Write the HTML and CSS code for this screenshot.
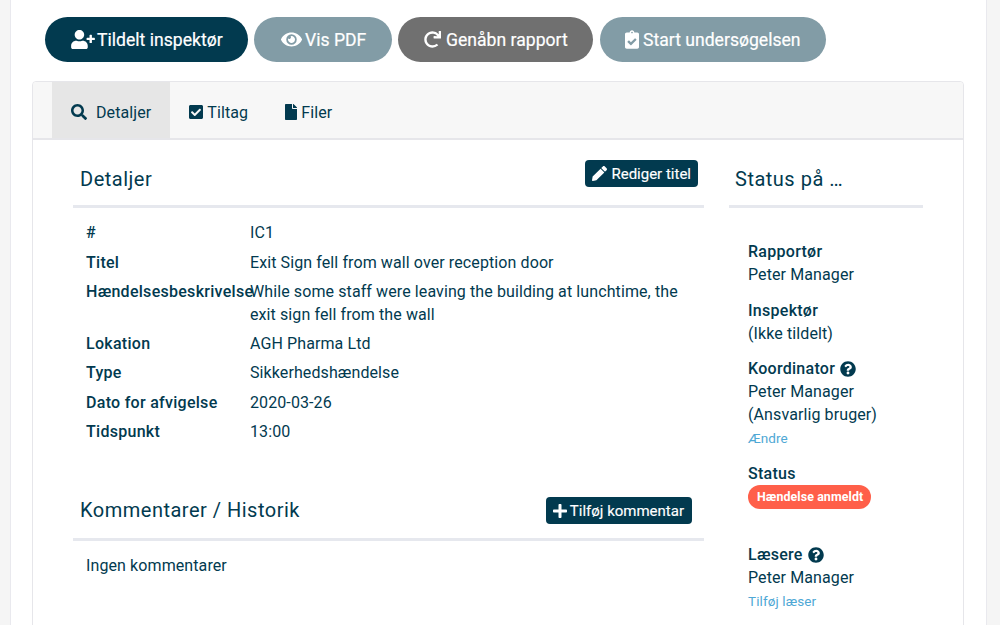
FILE: index.html
```html
<!DOCTYPE html>
<html lang="da">
<head>
<meta charset="utf-8">
<title>Detaljer</title>
<link rel="stylesheet" href="styles.css">
</head>
<body>
<main class="panel">
  <div class="actions">
    <button class="pill pill-dark"><svg class="ic-user" viewBox="0 0 640 512"><path d="M624 208h-64v-64c0-8.800-7.200-16-16-16h-32c-8.800 0-16 7.200-16 16v64h-64c-8.800 0-16 7.200-16 16v32c0 8.800 7.200 16 16 16h64v64c0 8.800 7.200 16 16 16h32c8.800 0 16-7.200 16-16v-64h64c8.800 0 16-7.200 16-16v-32c0-8.800-7.200-16-16-16zm-400 48c70.700 0 128-57.300 128-128S294.700 0 224 0 96 57.300 96 128s57.300 128 128 128zm89.600 32h-16.700c-22.200 10.200-46.900 16-72.900 16s-50.600-5.800-72.900-16h-16.700C60.200 288 0 348.200 0 422.400V464c0 26.500 21.500 48 48 48h352c26.500 0 48-21.500 48-48v-41.600c0-74.200-60.200-134.400-134.400-134.400z"/></svg>Tildelt inspektør</button>
    <button class="pill pill-muted pill-pdf"><svg class="ic-eye" viewBox="0 0 576 512"><path d="M572.520 241.400C518.290 135.590 410.930 64 288 64S57.680 135.640 3.480 241.410a32.350 32.350 0 0 0 0 29.190C57.710 376.410 165.070 448 288 448s230.320-71.640 284.520-177.410a32.350 32.350 0 0 0 0-29.190zM288 400a144 144 0 1 1 144-144 143.930 143.930 0 0 1-144 144zm0-240a95.310 95.310 0 0 0-25.310 3.790 47.850 47.850 0 0 1-66.900 66.900A95.780 95.780 0 1 0 288 160z"/></svg>Vis PDF</button>
    <button class="pill pill-grey"><svg class="ic-redo" viewBox="0 0 512 512"><path d="M500.330 0h-47.410a12 12 0 0 0-12 12.570l4 82.760A247.420 247.420 0 0 0 256 8C119.340 8 7.900 119.530 8 256.190 8.100 393.070 119.100 504 256 504a247.100 247.100 0 0 0 166.180-63.910 12 12 0 0 0 .480-17.430l-34-34a12 12 0 0 0-16.380-.550A176 176 0 1 1 402.100 157.800l-101.530-4.870a12 12 0 0 0-12.570 12v47.410a12 12 0 0 0 12 12h200.330a12 12 0 0 0 12-12V12a12 12 0 0 0-12-12z"/></svg>Genåbn rapport</button>
    <button class="pill pill-muted pill-start"><svg class="ic-clip" viewBox="0 0 384 512"><path d="M336 64h-80c0-35.300-28.700-64-64-64s-64 28.700-64 64H48C21.500 64 0 85.500 0 112v352c0 26.500 21.500 48 48 48h288c26.500 0 48-21.500 48-48V112c0-26.500-21.500-48-48-48zM192 40c13.300 0 24 10.700 24 24s-10.700 24-24 24-24-10.700-24-24 10.700-24 24-24zm121.200 231.800l-143 141.800c-4.700 4.700-12.300 4.600-17-.1l-82.600-83.300c-4.700-4.700-4.600-12.300.1-17L99.100 285c4.700-4.700 12.300-4.600 17 .1l46 46.400 106-105.200c4.700-4.700 12.300-4.600 17 .1l28.200 28.400c4.700 4.800 4.600 12.300-.1 17z"/></svg>Start undersøgelsen</button>
  </div>

  <section class="card">
    <nav class="tabs">
      <a class="tab tab-active"><svg class="ic-search" viewBox="0 0 512 512"><path d="M505 442.700L405.300 343c-4.500-4.500-10.600-7-17-7H372c27.600-35.300 44-79.700 44-128C416 93.100 322.900 0 208 0S0 93.100 0 208s93.100 208 208 208c48.300 0 92.700-16.400 128-44v16.300c0 6.400 2.500 12.500 7 17l99.700 99.700c9.400 9.400 24.600 9.400 33.900 0l28.300-28.300c9.400-9.400 9.400-24.600.1-34zM208 336c-70.700 0-128-57.200-128-128 0-70.700 57.200-128 128-128 70.700 0 128 57.200 128 128 0 70.700-57.200 128-128 128z"/></svg>Detaljer</a>
      <a class="tab"><svg class="ic-tab" viewBox="0 0 448 512"><path d="M400 480H48c-26.510 0-48-21.490-48-48V80c0-26.510 21.490-48 48-48h352c26.510 0 48 21.490 48 48v352c0 26.510-21.490 48-48 48zm-204.686-98.059l184-184c6.248-6.248 6.248-16.379 0-22.627l-22.627-22.627c-6.248-6.248-16.379-6.249-22.628 0L184 302.745l-70.059-70.059c-6.248-6.248-16.379-6.248-22.628 0l-22.627 22.627c-6.248 6.248-6.248 16.379 0 22.627l104 104c6.249 6.250 16.379 6.250 22.628.001z"/></svg>Tiltag</a>
      <a class="tab"><svg class="ic-file" viewBox="0 0 384 512"><path d="M224 136V0H24C10.700 0 0 10.700 0 24v464c0 13.300 10.700 24 24 24h336c13.300 0 24-10.700 24-24V160H248c-13.200 0-24-10.800-24-24zm160-14.100v6.100H256V0h6.100c6.400 0 12.500 2.500 17 7l97.900 98c4.500 4.500 7 10.600 7 16.900z"/></svg>Filer</a>
    </nav>

    <div class="card-body">
      <div class="main-col">
        <header class="sec-head">
          <h2>Detaljer</h2>
          <button class="btn btn-edit"><svg class="ic-pencil" viewBox="0 0 512 512"><path d="M497.900 142.100l-46.100 46.100c-4.700 4.700-12.300 4.700-17 0l-111-111c-4.700-4.700-4.700-12.300 0-17l46.100-46.100c18.700-18.700 49.100-18.700 67.900 0l60.100 60.100c18.800 18.700 18.800 49.100 0 67.900zM284.200 99.800L21.600 362.400.4 483.900c-2.900 16.400 11.400 30.600 27.800 27.800l121.500-21.300 262.600-262.600c4.700-4.700 4.700-12.300 0-17l-111-111c-4.800-4.700-12.400-4.700-17.100 0z"/></svg>Rediger titel</button>
        </header>
        <dl class="details">
          <div class="row"><dt>#</dt><dd>IC1</dd></div>
          <div class="row"><dt>Titel</dt><dd>Exit Sign fell from wall over reception door</dd></div>
          <div class="row"><dt>Hændelsesbeskrivelse</dt><dd>While some staff were leaving the building at lunchtime, the exit sign fell from the wall</dd></div>
          <div class="row"><dt>Lokation</dt><dd>AGH Pharma Ltd</dd></div>
          <div class="row"><dt>Type</dt><dd>Sikkerhedshændelse</dd></div>
          <div class="row"><dt>Dato for afvigelse</dt><dd>2020-03-26</dd></div>
          <div class="row"><dt>Tidspunkt</dt><dd>13:00</dd></div>
        </dl>
        <header class="sec-head sec-comments">
          <h2>Kommentarer / Historik</h2>
          <button class="btn btn-add"><svg class="ic-plus" viewBox="0 0 448 512"><path d="M416 208H272V64c0-17.670-14.330-32-32-32h-32c-17.670 0-32 14.330-32 32v144H32c-17.670 0-32 14.330-32 32v32c0 17.670 14.330 32 32 32h144v144c0 17.670 14.330 32 32 32h32c17.670 0 32-14.330 32-32V304h144c17.670 0 32-14.330 32-32v-32c0-17.670-14.330-32-32-32z"/></svg>Tilføj kommentar</button>
        </header>
        <p class="none">Ingen kommentarer</p>
      </div>

      <aside class="side-col">
        <header class="sec-head side-head"><h2>Status på …</h2></header>
        <div class="people">
          <div class="group"><h3>Rapportør</h3><p>Peter Manager</p></div>
          <div class="group"><h3>Inspektør</h3><p>(Ikke tildelt)</p></div>
          <div class="group group-coord"><h3>Koordinator <svg class="ic-q" viewBox="0 0 512 512"><path d="M504 256c0 136.997-111.043 248-248 248S8 392.997 8 256C8 119.083 119.043 8 256 8s248 111.083 248 248zM262.655 90c-54.497 0-89.255 22.957-116.549 63.758-3.536 5.286-2.353 12.415 2.715 16.258l34.699 26.310c5.205 3.947 12.621 3.008 16.665-2.122 17.864-22.658 30.113-35.797 57.303-35.797 20.429 0 45.698 13.148 45.698 32.958 0 14.976-12.363 22.667-32.534 33.976C247.128 238.528 216 254.941 216 296v4c0 6.627 5.373 12 12 12h56c6.627 0 12-5.373 12-12v-1.333c0-28.462 83.186-29.647 83.186-106.667 0-58.002-60.165-102-116.531-102zM256 338c-25.365 0-46 20.635-46 46 0 25.364 20.635 46 46 46s46-20.636 46-46c0-25.365-20.635-46-46-46z"/></svg></h3><p>Peter Manager</p><p>(Ansvarlig bruger)</p><a class="link">Ændre</a></div>
          <div class="group group-status"><h3>Status</h3><span class="badge">Hændelse anmeldt</span></div>
          <div class="group"><h3>Læsere <svg class="ic-q" viewBox="0 0 512 512"><path d="M504 256c0 136.997-111.043 248-248 248S8 392.997 8 256C8 119.083 119.043 8 256 8s248 111.083 248 248zM262.655 90c-54.497 0-89.255 22.957-116.549 63.758-3.536 5.286-2.353 12.415 2.715 16.258l34.699 26.310c5.205 3.947 12.621 3.008 16.665-2.122 17.864-22.658 30.113-35.797 57.303-35.797 20.429 0 45.698 13.148 45.698 32.958 0 14.976-12.363 22.667-32.534 33.976C247.128 238.528 216 254.941 216 296v4c0 6.627 5.373 12 12 12h56c6.627 0 12-5.373 12-12v-1.333c0-28.462 83.186-29.647 83.186-106.667 0-58.002-60.165-102-116.531-102zM256 338c-25.365 0-46 20.635-46 46 0 25.364 20.635 46 46 46s46-20.636 46-46c0-25.365-20.635-46-46-46z"/></svg></h3><p>Peter Manager</p><a class="link">Tilføj læser</a></div>
        </div>
      </aside>
    </div>
  </section>
</main>
</body>
</html>
```

FILE: styles.css
```css
* { box-sizing: border-box; }
html, body { height: 625px; overflow: hidden; }
body {
  margin: 0;
  background: #f5f5f5;
  color: #023a4f;
  font-family: Roboto, "Liberation Sans", sans-serif;
  font-size: 16px;
  letter-spacing: .1px;
  line-height: 23px;
}
svg { fill: currentColor; display: inline-block; flex: none; }
.panel {
  width: 977px;
  height: 625px;
  margin-left: 10px;
  background: #fff;
  border-left: 1px solid #e9e9ee;
  border-right: 1px solid #e9e9ee;
  padding: 17px 0 0 21px;
  overflow: hidden;
}
.actions { display: flex; gap: 6px; padding-left: 13px; }
.pill {
  display: flex;
  align-items: center;
  height: 45px;
  border: 0;
  border-radius: 23px;
  color: #fff;
  font: 400 17.600px/1 Roboto, "Liberation Sans", sans-serif;
  -webkit-text-stroke: .2px #fff;
  padding: 2px 0 0;
}
.pill-dark { background: #023a4f; width: 203px; padding-left: 26px; }
.pill-muted { background: #829ca6; }
.pill-grey { background: #707070; width: 195px; padding-left: 26px; }
.pill-pdf { width: 138px; padding-left: 27px; }
.pill-start { width: 226px; margin-left: 1px; padding-left: 25px; }
.ic-user { width: 24px; height: 19px; margin-right: 2px; margin-top: -2px; }
.ic-eye { width: 21px; height: 19px; margin-right: 3px; margin-top: -2px; }
.ic-redo { width: 17px; height: 17px; margin-right: 5px; margin-top: -2px; }
.ic-clip { width: 14px; height: 19px; margin-right: 4px; margin-top: -2px; }

.card {
  margin-top: 19px;
  width: 932px;
  border: 1px solid #e6e6ea;
  border-radius: 4px;
  height: 560px;
}
.tabs {
  display: flex;
  height: 58px;
  padding-left: 19px;
  background: #f7f7f7;
  border-bottom: 2px solid #e6e6ea;
  border-radius: 4px 4px 0 0;
}
.tab { display: flex; align-items: center; padding: 4px 18px 0 19px; height: 56px; }
.tab-active { background: #e6e6e6; padding: 4px 19px 0 19px; }
.ic-search { width: 16px; height: 16px; margin-right: 9px; }
.ic-tab { width: 14px; height: 16px; margin-right: 4px; }
.ic-file { width: 12px; height: 16px; margin-right: 4px; }

.card-body { display: flex; padding: 18px 40px 0; gap: 25px; }
.main-col { width: 631px; }
.side-col { width: 194px; }
.sec-head {
  display: flex;
  justify-content: space-between;
  align-items: flex-start;
  height: 50px;
  border-bottom: 3px solid #e6e8ee;
  padding: 2px 6px 0 7px;
}
h2 { margin: 1px 0 0; font-size: 20px; font-weight: 400; line-height: 36px; letter-spacing: .5px; }
.btn {
  display: flex;
  align-items: center;
  height: 27px;
  border: 0;
  border-radius: 4px;
  background: #023a4f;
  color: #fff;
  font: 400 15px/1 Roboto, "Liberation Sans", sans-serif;
  -webkit-text-stroke: .15px #fff;
  padding: 2px 7px 0;
}
.btn svg { margin-top: -2px; }
.btn-add { padding-right: 8px; }
.ic-pencil { width: 15px; height: 15px; margin-right: 4px; }
.ic-plus { width: 14px; height: 16px; margin-right: 3px; }
.details { margin: 13.250px 0 0; padding: 0 13px; }
.row { display: flex; margin-bottom: 6.300px; }
dt { width: 164px; flex: none; font-weight: 500; letter-spacing: .28px; white-space: nowrap; }
dd { margin: 0; width: 440px; }
.sec-comments { margin-top: 52.350px; padding-right: 12px; height: 46px; }
.sec-comments h2 { margin-top: -5px; }
.none { margin: 13px 13px 0; }
.side-head { padding-left: 6px; }
.people { padding: 32px 19px 0; }
.group { margin-bottom: 12.600px; }
.group-coord { margin-bottom: 12px; }
.group-status { margin-bottom: 34px; }
h3 { margin: 0; font-size: 16px; line-height: 23px; font-weight: 500; letter-spacing: .28px; display: flex; align-items: center; gap: 5px; }
p { margin: 0; }
.ic-q { width: 16px; height: 16px; }
.link { display: block; color: #4fa8d5; font-size: 13.500px; line-height: 24px; }
.badge {
  display: block;
  width: fit-content;
  height: 24px;
  padding: 0 8px 0 9px;
  border-radius: 12px;
  background: #ff5f49;
  color: #fff;
  font-size: 12.400px;
  line-height: 24px;
  font-weight: 700;
  white-space: nowrap;
}
```
